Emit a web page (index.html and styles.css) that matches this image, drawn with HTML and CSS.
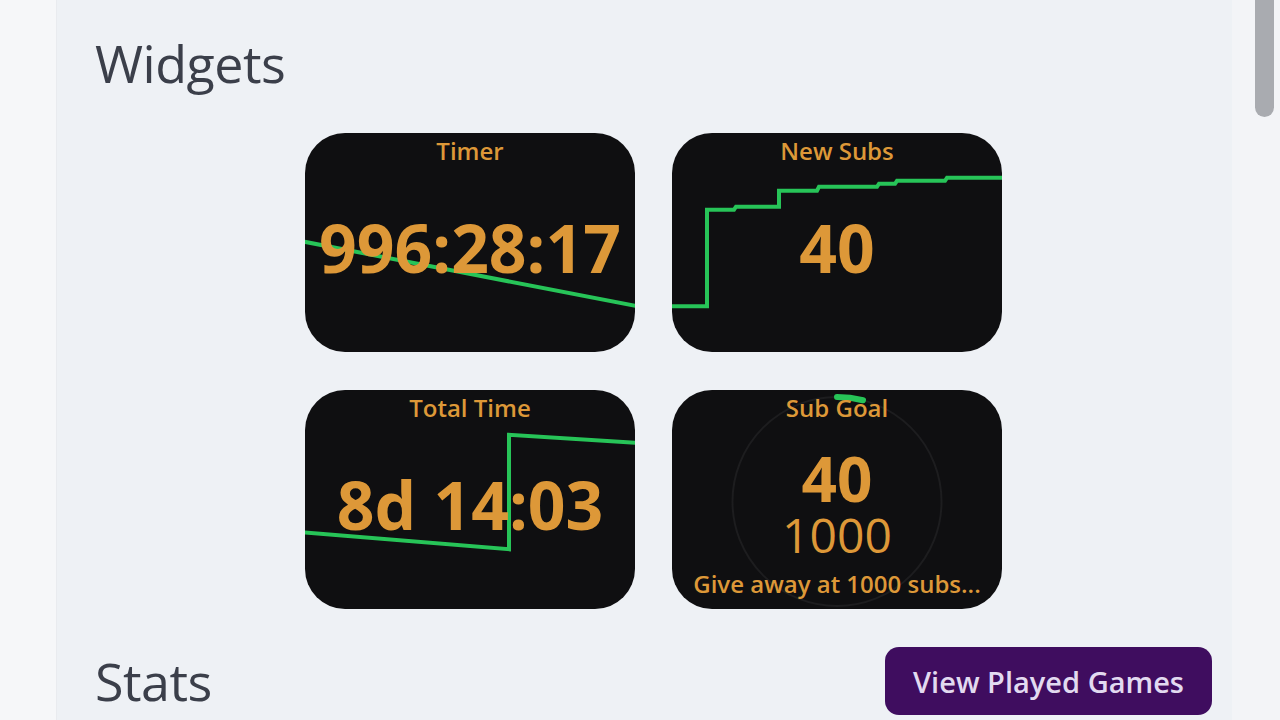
FILE: index.html
```html
<!DOCTYPE html>
<html lang="en">
<head>
  <meta charset="UTF-8">
  <title>Dashboard</title>
  <link rel="stylesheet" href="styles.css">
</head>
<body>
  <aside class="sidebar"></aside>

  <main class="content">
    <h1 class="section-title">Widgets</h1>

    <div class="widgets">
      <div class="widget">
        <svg class="chart" viewBox="0 0 330 220" preserveAspectRatio="none">
          <polyline points="-2,109 332,174" />
        </svg>
        <div class="widget-title">Timer</div>
        <div class="widget-value">996:28:17</div>
      </div>

      <div class="widget">
        <svg class="chart" viewBox="0 0 330 220" preserveAspectRatio="none">
          <polyline points="-2,174 35,174 35,77 62,77 64,74 107,74 107,58 145,58 147,54 205,54 207,51 223,51 225,48 273,48 275,45 332,45" />
        </svg>
        <div class="widget-title">New Subs</div>
        <div class="widget-value">40</div>
      </div>

      <div class="widget">
        <svg class="chart" viewBox="0 0 330 220" preserveAspectRatio="none">
          <polyline points="-2,143 204,160 204,45 332,53" />
        </svg>
        <div class="widget-title">Total Time</div>
        <div class="widget-value">8d 14:03</div>
      </div>

      <div class="widget goal">
        <svg class="chart" viewBox="0 0 330 220">
          <circle class="ring" cx="165" cy="112" r="105" />
          <circle class="ring-progress" cx="165" cy="112" r="105"
                  stroke-dasharray="26.4 700" transform="rotate(-90 165 112)" />
        </svg>
        <div class="widget-title">Sub Goal</div>
        <div class="goal-current">40</div>
        <div class="goal-target">1000</div>
        <div class="goal-note">Give away at 1000 subs...</div>
      </div>
    </div>

    <div class="stats-row">
      <h1 class="section-title">Stats</h1>
      <button class="btn-primary" type="button">View Played Games</button>
    </div>
  </main>

  <div class="scrollbar"><div class="scrollbar-thumb"></div></div>
</body>
</html>
```

FILE: styles.css
```css
html, body {
  margin: 0;
  height: 100%;
}
body {
  display: flex;
  overflow: hidden;
  font-family: "Open Sans", "Noto Sans", sans-serif;
  background: #eef1f5;
}
.sidebar {
  width: 56px;
  flex-shrink: 0;
  background: #f6f7f9;
  border-right: 1px solid #e9ebef;
}
.content {
  flex: 1;
  padding: 32px 20px 0 38px;
  overflow: hidden;
}
.scrollbar {
  width: 48px;
  flex-shrink: 0;
  background: #f3f4f7;
  padding-left: 23px;
  box-sizing: border-box;
}
.scrollbar-thumb {
  width: 19px;
  height: 117px;
  background: #a9abb0;
  border-radius: 0 0 10px 10px;
}
.section-title {
  margin: 0;
  font-size: 52px;
  font-weight: 400;
  line-height: 62px;
  letter-spacing: -0.5px;
  color: #3b3f4a;
}
.widgets {
  display: grid;
  grid-template-columns: 330px 330px;
  gap: 38px 37px;
  justify-content: center;
  margin-top: 39px;
}
.widget {
  position: relative;
  height: 219px;
  background: #0f0f11;
  border-radius: 40px;
  overflow: hidden;
  display: flex;
  flex-direction: column;
  align-items: center;
  color: #dd9838;
}
.chart {
  position: absolute;
  left: 0;
  top: 0;
  width: 100%;
  height: 100%;
}
.chart polyline {
  fill: none;
  stroke: #27c458;
  stroke-width: 4;
  stroke-linejoin: miter;
}
.ring {
  fill: none;
  stroke: #1d1d1f;
  stroke-width: 2;
}
.ring-progress {
  fill: none;
  stroke: #27c458;
  stroke-width: 6;
  stroke-linecap: round;
}
.widget-title,
.widget-value,
.goal-current,
.goal-target,
.goal-note {
  position: relative;
}
.widget-title {
  margin-top: 3px;
  font-size: 24px;
  font-weight: 600;
  line-height: 29px;
}
.widget-value {
  margin-top: 49px;
  font-size: 66px;
  font-weight: 700;
  line-height: 66px;
}
.goal-current {
  margin-top: 25px;
  font-size: 62px;
  font-weight: 700;
  line-height: 62px;
}
.goal-target {
  margin-top: 2px;
  font-size: 48px;
  font-weight: 400;
  line-height: 48px;
}
.goal-note {
  margin-top: 10px;
  font-size: 24px;
  font-weight: 600;
  line-height: 29px;
  white-space: nowrap;
}
.stats-row {
  display: flex;
  justify-content: space-between;
  align-items: center;
  margin-top: 38px;
}
.btn-primary {
  height: 68px;
  padding: 0 28px;
  border: none;
  border-radius: 14px;
  background: #3f0d5f;
  color: #e2daf0;
  font-family: "Open Sans", "Noto Sans", sans-serif;
  font-size: 29px;
  font-weight: 600;
}
```
